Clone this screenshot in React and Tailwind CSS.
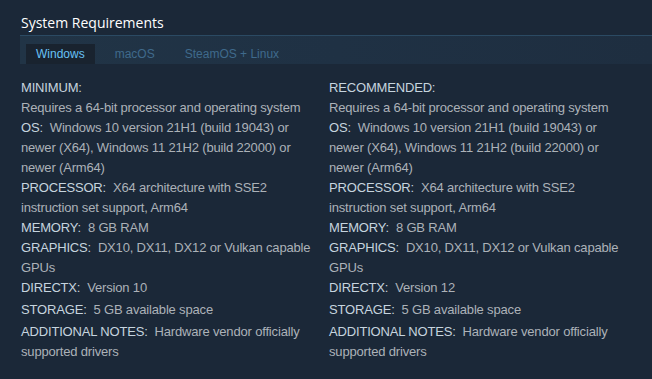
import React from 'react';

const minimum = [
  ['OS:', 'Windows 10 version 21H1 (build 19043) or newer (X64), Windows 11 21H2 (build 22000) or newer (Arm64)'],
  ['PROCESSOR:', 'X64 architecture with SSE2 instruction set support, Arm64'],
  ['MEMORY:', '8 GB RAM'],
  ['GRAPHICS:', 'DX10, DX11, DX12 or Vulkan capable GPUs'],
  ['DIRECTX:', 'Version 10'],
  ['STORAGE:', '5 GB available space'],
  ['ADDITIONAL NOTES:', 'Hardware vendor officially supported drivers'],
];

const recommended = minimum.map(([k, v]) => (k === 'DIRECTX:' ? [k, 'Version 12'] : [k, v]));

function ReqColumn({ title, rows }) {
  return (
    <ul className="text-[13px] leading-5 tracking-[-0.17px] text-[#acb2b8]">
      <li className="text-[#c6d4df]">{title}</li>
      <li>Requires a 64-bit processor and operating system</li>
      {rows.map(([label, value]) => (
        <li key={label} className="[&:nth-last-child(-n+2)]:mt-[2px]">
          <span className="text-[#c6d4df]">{label}</span>&nbsp; {value}
        </li>
      ))}
    </ul>
  );
}

export default function App() {
  return (
    <div className="min-h-[379px] w-[652px] bg-[#1b2838] pt-[13px] font-['Liberation_Sans',Arial,sans-serif]">
      <h2 className="ml-[21px] font-['Open_Sans',sans-serif] text-[14px] leading-[20px] text-white">
        System Requirements
      </h2>

      {/* OS tabs */}
      <div className="ml-5 mt-[2px] border-t border-[#2b4a63] bg-gradient-to-r from-[#213446] via-[#1f3144] to-[#1e2e40] pl-[6px] pt-[8px]">
        <div className="flex gap-[10px] text-[12px] leading-5">
          <div className="bg-[#19232f] px-[10px] text-[#67c1f5]">Windows</div>
          <div className="px-[10px] text-[#3f6a8c]">macOS</div>
          <div className="px-[10px] text-[#3f6a8c]">SteamOS + Linux</div>
        </div>
      </div>

      <div className="mt-[14px] grid grid-cols-[294px_294px] gap-[14px] pl-[21px]">
        <ReqColumn title="MINIMUM:" rows={minimum} />
        <ReqColumn title="RECOMMENDED:" rows={recommended} />
      </div>
    </div>
  );
}
